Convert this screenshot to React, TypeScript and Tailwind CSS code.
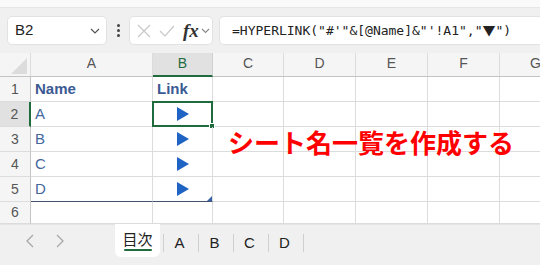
import React from "react";

const COLS = [
  { k: "A", w: 122 },
  { k: "B", w: 60 },
  { k: "C", w: 71 },
  { k: "D", w: 72 },
  { k: "E", w: 72 },
  { k: "F", w: 72 },
  { k: "G", w: 72 },
];

const GRID = "border-[#dcdcdc]";

function Tri() {
  return (
    <svg width="14" height="14" viewBox="0 0 14 14">
      <polygon points="1,0 13,7 1,14" fill="#1f63c4" />
    </svg>
  );
}

export default function App() {
  const rows: { n: number; a: React.ReactNode; b: React.ReactNode; header?: boolean }[] = [
    { n: 1, a: "Name", b: "Link", header: true },
    { n: 2, a: "A", b: <Tri /> },
    { n: 3, a: "B", b: <Tri /> },
    { n: 4, a: "C", b: <Tri /> },
    { n: 5, a: "D", b: <Tri /> },
    { n: 6, a: "", b: "" },
  ];
  return (
    <div
      className="relative w-[540px] h-[265px] overflow-hidden bg-white"
      style={{ fontFamily: '"Liberation Sans", "Noto Sans CJK JP", sans-serif' }}
    >
      {/* top strip */}
      <div className="h-[8px] bg-[#fafafa] border-b border-[#e6e6e6]" />
      {/* toolbar */}
      <div className="h-[45px] bg-[#f0f0f0] flex items-start pt-[8px] pl-[7px]">
        <div className="w-[100px] h-[29px] bg-white rounded-[5px] border border-[#e2e2e2] flex items-center justify-between pl-[7px] pr-[6px]">
          <span className="text-[15px] text-[#222]">B2</span>
          <svg width="10" height="6" viewBox="0 0 10 6">
            <path d="M1 1 L5 5 L9 1" stroke="#555" strokeWidth="1.2" fill="none" />
          </svg>
        </div>
        <div className="w-[22px] h-[29px] flex flex-col items-center justify-center gap-[2px]">
          <div className="w-[3px] h-[3px] rounded-full bg-[#444]" />
          <div className="w-[3px] h-[3px] rounded-full bg-[#444]" />
          <div className="w-[3px] h-[3px] rounded-full bg-[#444]" />
        </div>
        <div className="w-[84px] h-[29px] bg-white rounded-[5px] border border-[#e2e2e2] flex items-center pl-[7px]">
          <svg width="14" height="14" viewBox="0 0 14 14">
            <path d="M1 1 L13 13 M13 1 L1 13" stroke="#c8c8c8" strokeWidth="1.2" />
          </svg>
          <svg width="16" height="14" viewBox="0 0 16 14" className="ml-[8px]">
            <path d="M1 7 L6 12 L15 2" stroke="#c8c8c8" strokeWidth="1.2" fill="none" />
          </svg>
          <span
            className="ml-[8px] text-[19px] italic font-bold text-[#333] leading-none"
            style={{ fontFamily: '"Liberation Serif", serif' }}
          >
            fx
          </span>
          <svg width="9" height="6" viewBox="0 0 9 6" className="ml-[2px]">
            <path d="M1 1 L4.5 4.5 L8 1" stroke="#888" strokeWidth="1.1" fill="none" />
          </svg>
        </div>
        <div className="ml-[6px] flex-1 h-[29px] bg-white rounded-l-[5px] border border-r-0 border-[#e2e2e2] flex items-center pl-[12px]">
          <span
            className="text-[13px] text-[#222] whitespace-nowrap"
            style={{ fontFamily: '"DejaVu Sans Mono", "Liberation Mono", monospace' }}
          >
            =HYPERLINK("#'"&amp;[@Name]&amp;"'!A1","
            <span style={{ fontFamily: '"Noto Sans CJK JP", sans-serif' }}>▼</span>
            ")
          </span>
        </div>
      </div>
      {/* column headers */}
      <div className="flex h-[24px] bg-[#f5f5f5] border-b border-[#c4c4c4]">
        <div className="w-[31px] shrink-0 relative border-r border-[#dcdcdc]">
          <svg width="16" height="16" viewBox="0 0 16 16" className="absolute right-[3px] bottom-[2px]">
            <polygon points="16,0 16,16 0,16" fill="#dcdcdc" />
          </svg>
        </div>
        {COLS.map((c) => (
          <div
            key={c.k}
            className={
              c.k === "B"
                ? "shrink-0 flex items-center justify-center text-[14px] text-[#1f6b3e] bg-[#e1e1e1] border-r border-[#d0d0d0] border-b-2 border-b-[#1f6b3e] -mb-[1px] pb-[2px]"
                : "shrink-0 flex items-center justify-center text-[14px] text-[#555] border-r border-[#dcdcdc] pb-[2px]"
            }
            style={{ width: c.w }}
          >
            {c.k}
          </div>
        ))}
      </div>
      {/* rows */}
      {rows.map((r) => (
        <div key={r.n} className={r.n === 6 ? "flex h-[22px]" : "flex h-[25px]"}>
          <div
            className={
              r.n === 2
                ? "w-[31px] shrink-0 flex items-center justify-center text-[14px] text-[#555] bg-[#e1e1e1] border-r-2 border-r-[#1f6b3e] border-b border-b-[#dcdcdc]"
                : "w-[31px] shrink-0 flex items-center justify-center text-[14px] text-[#555] bg-[#f5f5f5] border-r border-r-[#c4c4c4] border-b border-b-[#dcdcdc]"
            }
          >
            {r.n}
          </div>
          <div
            className={
              (r.n === 5 ? "border-b-[#44546a] " : "border-b-[#dcdcdc] ") +
              (r.header ? "font-bold text-[#3b5a93] " : "text-[#44689e] ") +
              "w-[122px] shrink-0 border-r border-b border-r-[#dcdcdc] flex items-center pl-[4px] text-[15px]"
            }
          >
            {r.a}
          </div>
          <div
            className={
              (r.n === 5 ? "border-b-[#44546a] " : "border-b-[#dcdcdc] ") +
              (r.header ? "font-bold text-[#3b5a93] justify-start pl-[4px] " : "justify-center ") +
              "relative w-[60px] shrink-0 border-r border-b border-r-[#dcdcdc] flex items-center text-[15px]"
            }
          >
            {r.b}
            {r.n === 2 && (
              <div className="absolute -left-[1px] -top-[1px] w-[61px] h-[26px] border-2 border-[#1f6b3e]">
                <div className="absolute -right-[4px] -bottom-[4px] w-[6px] h-[6px] bg-[#1f6b3e] border border-white" />
              </div>
            )}
            {r.n === 5 && (
              <svg width="5" height="5" viewBox="0 0 5 5" className="absolute right-[0px] bottom-[0px]">
                <polygon points="5,0 5,5 0,5" fill="#3461a8" />
              </svg>
            )}
          </div>
          {COLS.slice(2).map((c) => (
            <div
              key={c.k}
              className={"shrink-0 border-r border-b " + GRID}
              style={{ width: c.w }}
            />
          ))}
        </div>
      ))}
      {/* sheet tabs */}
      <div className="flex h-[43px] bg-[#f0f0f0] border-t border-[#e4e4e4]">
        <div className="w-[115px] shrink-0 flex items-start pt-[8px] pl-[25px] gap-[20px] text-[#a8a8a8]">
          <svg width="10" height="16" viewBox="0 0 10 16">
            <path d="M8 2 L2 8 L8 14" stroke="#a8a8a8" strokeWidth="1.3" fill="none" />
          </svg>
          <svg width="10" height="16" viewBox="0 0 10 16">
            <path d="M2 2 L8 8 L2 14" stroke="#a8a8a8" strokeWidth="1.3" fill="none" />
          </svg>
        </div>
        <div className="w-[45px] h-[33px] -mt-[1px] shrink-0 bg-white rounded-b-[6px] flex flex-col items-center pt-[6px]">
          <span className="text-[15px] text-[#222] leading-[18px]" style={{ fontFamily: '"Noto Sans CJK JP", sans-serif' }}>
            目次
          </span>
          <div className="w-[28px] h-[2px] bg-[#1f6b3e] mt-[1px] rounded-full" />
        </div>
        {["A", "B", "C", "D"].map((t) => (
          <div key={t} className="flex items-start pt-[8px]">
            <div className="w-[1px] h-[18px] bg-[#cfcfcf] mt-[1px] ml-[3px]" />
            <div className="w-[31px] text-center text-[15px] text-[#222] leading-[20px]">{t}</div>
          </div>
        ))}
        <div className="flex items-start pt-[8px]">
          <div className="w-[1px] h-[18px] bg-[#cfcfcf] mt-[1px] ml-[3px]" />
        </div>
      </div>
      {/* overlay text */}
      <div
        className="absolute left-[228px] top-[129px] text-[26px] leading-[26px] font-bold text-[#ff0000] whitespace-nowrap"
        style={{ fontFamily: '"Noto Sans CJK JP", sans-serif' }}
      >
        シート名一覧を作成する
      </div>
    </div>
  );
}
